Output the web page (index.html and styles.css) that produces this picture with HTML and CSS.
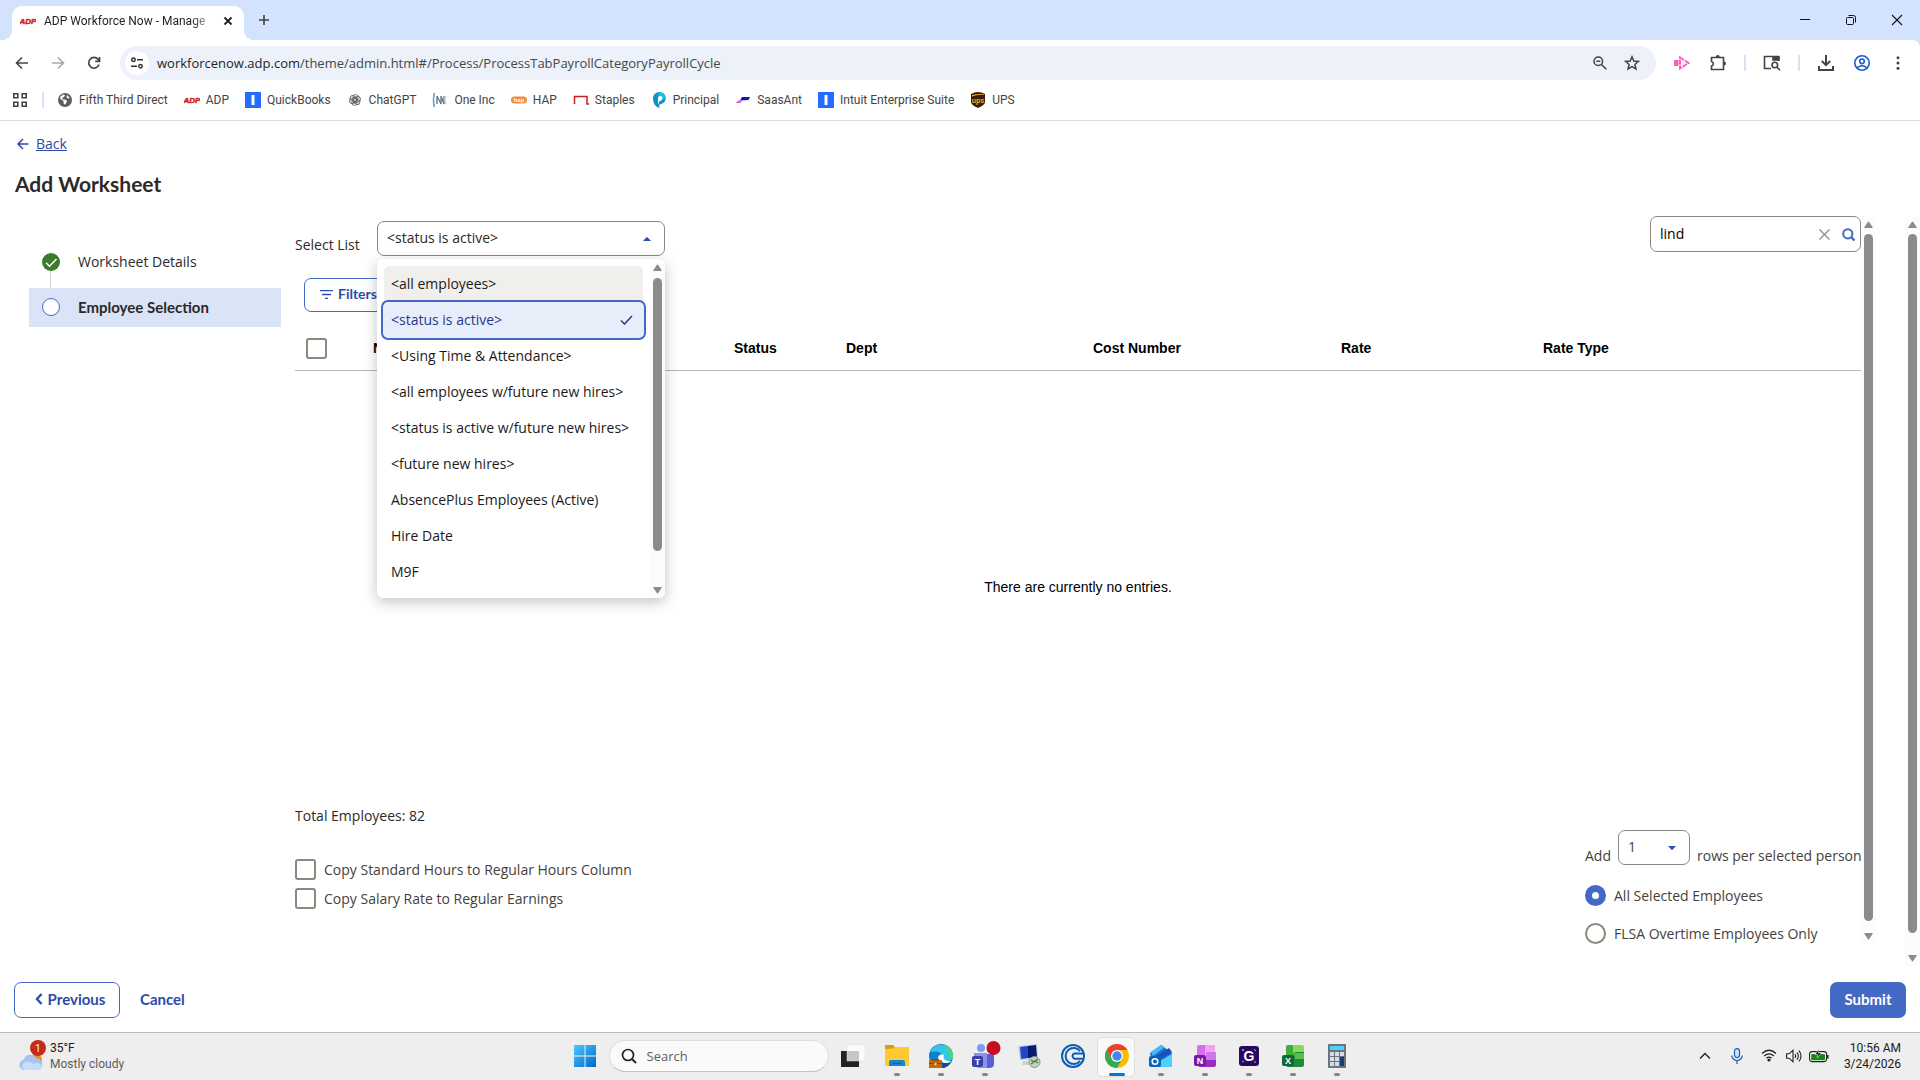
FILE: index.html
```html
<!DOCTYPE html>
<html lang="en">
<head>
<meta charset="utf-8">
<meta name="viewport" content="width=device-width, initial-scale=1">
<title>ADP Workforce Now - Manage Payroll</title>
<link rel="stylesheet" href="styles.css">
</head>
<body>
<header class="browser">
  <div class="tabs">
    <div class="tab">
      <svg width="16" height="16" viewBox="0 0 16 16"><text x="8" y="11" font-family="Liberation Sans, sans-serif" font-size="8" font-weight="700" font-style="italic" text-anchor="middle" fill="#d0271d" stroke="#d0271d" stroke-width=".5">ADP</text></svg>
      <span class="tab-title">ADP Workforce Now - Manage</span>
      <button class="icon-btn tab-close" aria-label="Close tab"><svg width="10" height="10" viewBox="0 0 10 10"><path d="M1.500 1.500l7 7M8.500 1.500l-7 7" stroke="#1f1f1f" stroke-width="1.800"/></svg></button>
    </div>
    <button class="icon-btn new-tab" aria-label="New tab"><svg width="12" height="12" viewBox="0 0 12 12"><path d="M6 1v10M1 6h10" stroke="#444" stroke-width="1.600"/></svg></button>
    <div class="window-controls">
      <button class="icon-btn" aria-label="Minimize"><svg width="12" height="12" viewBox="0 0 12 12"><path d="M1 5.500h10" stroke="#111"/></svg></button>
      <button class="icon-btn" aria-label="Restore"><svg width="12" height="12" viewBox="0 0 12 12" fill="none" stroke="#111"><rect x="1.500" y="3.500" width="7" height="7" rx="1"/><path d="M3.500 1.500h5a2 2 0 0 1 2 2v5"/></svg></button>
      <button class="icon-btn" aria-label="Close"><svg width="12" height="12" viewBox="0 0 12 12"><path d="M1 1l10 10M11 1L1 11" stroke="#111" stroke-width="1.100"/></svg></button>
    </div>
  </div>
  <div class="nav">
    <button class="icon-btn" aria-label="Back"><svg width="14" height="14" viewBox="0 0 14 14" fill="none" stroke="#444" stroke-width="1.600"><path d="M13 7H2M7 1.500L1.500 7 7 12.500"/></svg></button>
    <button class="icon-btn" aria-label="Forward"><svg width="14" height="14" viewBox="0 0 14 14" fill="none" stroke="#a8a8a8" stroke-width="1.600"><path d="M1 7h11M7 1.500L12.500 7 7 12.500"/></svg></button>
    <button class="icon-btn" aria-label="Reload"><svg width="14" height="14" viewBox="0 0 14 14" fill="none" stroke="#444" stroke-width="1.700"><path d="M12 8.500A5.300 5.300 0 1 1 11 3.300L12.500 5M12.500 1v4.300H8.200"/></svg></button>
    <div class="omnibox">
      <button class="site-info" aria-label="Site information"><svg width="12" height="12" viewBox="0 0 12 12" fill="none" stroke="#333" stroke-width="1.500"><circle cx="2.500" cy="2.800" r="1.700"/><path d="M6 2.800h6M0 9.200h6"/><circle cx="9.500" cy="9.200" r="1.700"/></svg></button>
      <span class="url"><b>workforcenow.adp.com</b>/theme/admin.html#/Process/ProcessTabPayrollCategoryPayrollCycle</span>
      <button class="icon-btn" aria-label="Zoom"><svg width="14" height="14" viewBox="0 0 14 14" fill="none" stroke="#444" stroke-width="1.500"><circle cx="5.300" cy="5.300" r="4.300"/><path d="M8.500 8.500L13.300 13.300M3.300 5.300h4"/></svg></button>
      <button class="icon-btn" aria-label="Bookmark this tab"><svg width="16" height="16" viewBox="0 0 16 16" fill="none" stroke="#444" stroke-width="1.500"><path d="M8 1.800l1.800 4.200 4.600.4-3.500 3 1.100 4.500L8 11.500l-4 2.400 1.100-4.500-3.500-3 4.600-.4z"/></svg></button>
    </div>
    <div class="extensions">
      <button class="icon-btn" aria-label="Screen recorder"><svg width="16" height="14" viewBox="0 0 16 14"><path fill="#ff5cb8" d="M0 4h4.500v6H0z"/><path fill="none" stroke="#ff5cb8" stroke-width="2" stroke-dasharray="5 1" d="M6 1.500L14.500 7 6 12.500z"/></svg></button>
      <button class="icon-btn" aria-label="Extensions"><svg width="16" height="16" viewBox="0 0 16 16" fill="none" stroke="#444" stroke-width="1.600"><path d="M1.500 2.500h12v12h-12V11a2.300 2.300 0 0 0 0-4.500z"/><path fill="#444" stroke="none" d="M5.800 2a2 2 0 0 1 4 0zM14 6.500a2 2 0 0 1 0 4z"/></svg></button>
      <span class="divider"></span>
      <button class="icon-btn" aria-label="Search tabs"><svg width="18" height="16" viewBox="0 0 18 16" fill="none" stroke="#444" stroke-width="1.600"><path d="M8 13.500H1.500v-12h14V6"/><path fill="#444" d="M10 2h6v3h-6z"/><circle cx="11.800" cy="10" r="2.800"/><path d="M13.800 12l3.200 3.200"/></svg></button>
      <span class="divider"></span>
      <button class="icon-btn" aria-label="Downloads"><svg width="16" height="16" viewBox="0 0 16 16" fill="none" stroke="#444" stroke-width="2"><path d="M8 0v10M3.800 6L8 10.200 12.200 6M1 11v4h14v-4"/></svg></button>
      <button class="icon-btn" aria-label="Profile"><svg width="16" height="16" viewBox="0 0 16 16" fill="none" stroke="#1a5bd0" stroke-width="1.600"><circle cx="8" cy="8" r="7.200"/><circle cx="8" cy="6.300" r="2.300"/><path d="M3 13q5-4.500 10 0"/></svg></button>
      <button class="icon-btn" aria-label="Menu"><svg width="4" height="14" viewBox="0 0 4 14" fill="#444"><circle cx="2" cy="1.700" r="1.500"/><circle cx="2" cy="7" r="1.500"/><circle cx="2" cy="12.300" r="1.500"/></svg></button>
    </div>
  </div>
  <nav class="bookmarks" aria-label="Bookmarks">
    <button class="icon-btn apps" aria-label="Apps"><svg width="14" height="14" viewBox="0 0 14 14" fill="none" stroke="#444" stroke-width="1.600"><path d="M.8.8h4v4h-4zM9.200.8h4v4h-4zM.8 9.200h4v4h-4zM9.200 9.200h4v4h-4z"/></svg></button>
    <span class="divider"></span>
    <a href="#"><svg width="16" height="16" viewBox="0 0 16 16"><circle cx="8" cy="8" r="7" fill="#5a5e63"/><path d="M3 5l3-2.500 2 .5-1 2-2 1 1 1.500 3 .3 1 2-2 3-1.300-1L6.500 9 3.500 7zM10 3l3 3-2 .5L9.500 5z" fill="#fff"/></svg>Fifth Third Direct</a>
    <a href="#"><svg width="16" height="16" viewBox="0 0 16 16"><text x="8" y="11" font-family="Liberation Sans, sans-serif" font-size="8" font-weight="700" font-style="italic" text-anchor="middle" fill="#d0271d" stroke="#d0271d" stroke-width=".5">ADP</text></svg>ADP</a>
    <a href="#"><svg width="16" height="16" viewBox="0 0 16 16"><path fill="#236cff" d="M0 0h16v16H0z"/><path fill="#fff" d="M6.500 3h3v10h-3z"/></svg>QuickBooks</a>
    <a href="#"><svg width="16" height="16" viewBox="0 0 16 16" fill="none" stroke="#666" stroke-width=".9"><rect x="6" y="2.500" width="5" height="7" rx="2.500"/><rect x="6" y="2.500" width="5" height="7" rx="2.500" transform="rotate(60 8 8)"/><rect x="6" y="2.500" width="5" height="7" rx="2.500" transform="rotate(120 8 8)"/><rect x="6" y="2.500" width="5" height="7" rx="2.500" transform="rotate(180 8 8)"/><rect x="6" y="2.500" width="5" height="7" rx="2.500" transform="rotate(240 8 8)"/><rect x="6" y="2.500" width="5" height="7" rx="2.500" transform="rotate(300 8 8)"/></svg>ChatGPT</a>
    <a href="#"><svg width="16" height="16" viewBox="0 0 16 16" fill="none"><path d="M2.500 1Q.5 8 2.500 15" stroke="#5aa5d2" stroke-width="1.600"/><path d="M5 4v8M5 4l4 8V4l3 8V4" stroke="#62738a" stroke-width="1.300"/><path d="M14 4q-2 4 0 8" stroke="#b6dff0" stroke-width="1.500"/></svg>One Inc</a>
    <a href="#"><svg width="16" height="16" viewBox="0 0 16 16"><rect y="4.500" width="16" height="7" rx="3.500" fill="#f08a3c"/><text x="8" y="10" text-anchor="middle" font-family="Liberation Sans, sans-serif" font-weight="700" font-size="6" fill="#fff">hap</text></svg>HAP</a>
    <a href="#"><svg width="16" height="16" viewBox="0 0 16 16" fill="none"><path d="M1.500 12V4.500h12.500V12h2" stroke="#cc1b24" stroke-width="1.500"/></svg>Staples</a>
    <a href="#"><svg width="16" height="16" viewBox="0 0 16 16"><path fill="#0a94cc" d="M8.500 0a6.200 6.200 0 1 1 0 12.400Q8 14 8.500 16 2 14 2 6.500A6.400 6.400 0 0 1 8.500 0z"/><path fill="#17c2de" d="M8.500 0a6.200 6.200 0 0 1 5.800 8L7 3z"/><path fill="#fff" d="M7 12V6.200A2.300 2.300 0 1 1 9.500 8.700Q7.500 9 7.500 12z"/></svg>Principal</a>
    <a href="#"><svg width="16" height="16" viewBox="0 0 16 16"><path fill="#e45bc2" d="M1 11l2-2.500h4L5.500 11z"/><path fill="#1212c6" d="M5 8.500L7 5h8l-1.500 3z"/></svg>SaasAnt</a>
    <a href="#"><svg width="16" height="16" viewBox="0 0 16 16"><path fill="#236cff" d="M0 0h16v16H0z"/><path fill="#fff" d="M6.500 3h3v10h-3z"/></svg>Intuit Enterprise Suite</a>
    <a href="#"><svg width="16" height="16" viewBox="0 0 16 16"><path fill="#3a1d0c" d="M1 2q7-4 14 0v8q0 3-7 6-7-3-7-6z"/><path fill="#f5a81c" d="M2 3q6-1.500 12-1v.800q-7-.4-12 1.600z"/><text x="8" y="11" text-anchor="middle" font-family="Liberation Sans, sans-serif" font-weight="700" font-size="7" fill="#f5a81c">ups</text></svg>UPS</a>
  </nav>
</header>

<main class="page">
  <a class="back" href="#"><svg width="12" height="12" viewBox="0 0 12 12" fill="none" stroke="#2c4ba8" stroke-width="1.500"><path d="M11.500 6H1.500M6 1L1 6l5 5"/></svg><span>Back</span></a>
  <h1>Add Worksheet</h1>

  <div class="panel">
    <ol class="steps">
      <li class="step done"><svg width="18" height="18" viewBox="0 0 18 18"><circle cx="9" cy="9" r="9" fill="#3d7a2e"/><path d="M4 9.800l3.500 3.500L14.500 6" fill="none" stroke="#fff" stroke-width="1.500"/></svg>Worksheet Details</li>
      <li class="step current" aria-current="step"><svg width="18" height="18" viewBox="0 0 18 18"><circle cx="9" cy="9" r="8.500" fill="#fff" stroke="#4469c5"/></svg>Employee Selection</li>
    </ol>

    <section class="content">
      <div class="controls">
        <div class="list-field">
          <label for="list">Select List</label>
          <div class="combo">
            <select id="list" class="field"><option>&lt;status is active&gt;</option></select>
            <svg class="caret" width="8" height="4" viewBox="0 0 8 4"><path fill="#2c4fb3" d="M3.500.2h1L8 4H0z"/></svg>
            <div class="menu">
              <ul role="listbox" aria-label="Select List">
                <li role="option" class="hover">&lt;all employees&gt;</li>
                <li role="option" class="selected" aria-selected="true">&lt;status is active&gt;<svg width="13" height="10" viewBox="0 0 13 10" fill="none" stroke="#1f3a8a" stroke-width="1.500"><path d="M1 5.500L4.500 9 12 1"/></svg></li>
                <li role="option">&lt;Using Time &amp; Attendance&gt;</li>
                <li role="option">&lt;all employees w/future new hires&gt;</li>
                <li role="option">&lt;status is active w/future new hires&gt;</li>
                <li role="option">&lt;future new hires&gt;</li>
                <li role="option">AbsencePlus Employees (Active)</li>
                <li role="option">Hire Date</li>
                <li role="option">M9F</li>
              </ul>
              <div class="scroll menu-scroll"><svg width="9" height="8" viewBox="0 0 9 8"><path fill="#8b8b8b" d="M4 .8q.5-.7 1 0l3.700 5.400q.4.8-.5.8H.8Q-.1 7 .3 6.200z"/></svg><span class="thumb"></span><svg width="9" height="8" viewBox="0 0 9 8"><path fill="#8b8b8b" d="M4 7.200q.5.7 1 0l3.700-5.400Q9.100 1 8.200 1H.8Q-.1 1 .3 1.800z"/></svg></div>
            </div>
          </div>
        </div>
        <div class="search">
          <input type="text" value="lind" aria-label="Search employees">
          <button class="icon-btn" aria-label="Clear"><svg width="11" height="11" viewBox="0 0 11 11"><path d="M.5.5l10 10M10.500.5l-10 10" stroke="#8a8a8a" stroke-width="1.200"/></svg></button>
          <button class="icon-btn" aria-label="Search"><svg width="13" height="13" viewBox="0 0 13 13" fill="none" stroke="#4469c5" stroke-width="2"><circle cx="5.800" cy="5.800" r="4.600"/><path d="M9 9l3.500 3.500" stroke-width="2.400"/></svg></button>
        </div>
      </div>

      <button class="btn outline filters"><svg width="13" height="9" viewBox="0 0 13 9" stroke="#2c4fb3" stroke-width="1.300"><path d="M0 .7h13M2 4.500h9M5 8.300h3"/></svg>Filters</button>

      <table class="grid">
        <colgroup><col class="c-check"><col class="c-name"><col class="c-status"><col class="c-dept"><col class="c-cost"><col class="c-rate"><col></colgroup>
        <thead><tr><th><input type="checkbox" aria-label="Select all"></th><th>Name</th><th>Status</th><th>Dept</th><th>Cost Number</th><th>Rate</th><th>Rate Type</th></tr></thead>
        <tbody><tr><td colspan="7">There are currently no entries.</td></tr></tbody>
      </table>

      <p class="total">Total Employees: 82</p>

      <div class="options">
        <div class="checks">
          <label><input type="checkbox">Copy Standard Hours to Regular Hours Column</label>
          <label><input type="checkbox">Copy Salary Rate to Regular Earnings</label>
        </div>
        <div class="rows">
          <div class="add-rows">
            <label for="count">Add</label>
            <div class="combo">
              <select id="count" class="field"><option>1</option></select>
              <svg class="caret" width="8" height="4" viewBox="0 0 8 4"><path fill="#2c4fb3" d="M3.500 3.800h1L8 0H0z"/></svg>
            </div>
            <span>rows per selected person</span>
          </div>
          <label><input type="radio" name="scope" checked>All Selected Employees</label>
          <label><input type="radio" name="scope">FLSA Overtime Employees Only</label>
        </div>
      </div>
    </section>

    <div class="scroll inner-scroll"><svg width="9" height="8" viewBox="0 0 9 8"><path fill="#8b8b8b" d="M4 .8q.5-.7 1 0l3.700 5.400q.4.8-.5.8H.8Q-.1 7 .3 6.200z"/></svg><span class="thumb"></span><svg width="9" height="8" viewBox="0 0 9 8"><path fill="#8b8b8b" d="M4 7.200q.5.7 1 0l3.700-5.400Q9.100 1 8.200 1H.8Q-.1 1 .3 1.800z"/></svg></div>
    <div class="scroll outer-scroll"><svg width="9" height="8" viewBox="0 0 9 8"><path fill="#8b8b8b" d="M4 .8q.5-.7 1 0l3.700 5.400q.4.8-.5.8H.8Q-.1 7 .3 6.200z"/></svg><span class="thumb"></span><svg width="9" height="8" viewBox="0 0 9 8"><path fill="#8b8b8b" d="M4 7.200q.5.7 1 0l3.700-5.400Q9.100 1 8.200 1H.8Q-.1 1 .3 1.800z"/></svg></div>
  </div>

  <div class="actions">
    <button class="btn outline previous"><svg width="8" height="12" viewBox="0 0 8 12" fill="none" stroke="#2c4fb3" stroke-width="2.400"><path d="M6.500 1L2 6l4.500 5"/></svg>Previous</button>
    <button class="btn text">Cancel</button>
    <button class="btn primary">Submit</button>
  </div>
</main>

<footer class="taskbar">
  <button class="weather">
    <svg width="28" height="32" viewBox="0 0 28 32"><circle cx="18" cy="20" r="6" fill="#f28a1e"/><path d="M6 30a5 5 0 0 1-.5-9.900 7 7 0 0 1 13-1.500A6 6 0 0 1 21 30z" fill="#a9c3ee"/><path d="M6 30a5 5 0 0 1 0-7.500Q12 20 15 24q6-3 9 2.500-.5 3-3 3.500z" fill="#c9ddf8"/><circle cx="20" cy="8" r="8" fill="#c42b1c"/><text x="20" y="12" text-anchor="middle" font-family="Open Sans, sans-serif" font-size="11" fill="#fff">1</text></svg>
    <span>35°F<br><small>Mostly cloudy</small></span>
  </button>
  <div class="apps-row">
    <button class="app" aria-label="Start"><svg width="24" height="24" viewBox="0 0 24 24"><defs><linearGradient id="win" x2="1" y2="1"><stop stop-color="#4cc9ff"/><stop offset="1" stop-color="#0067c9"/></linearGradient></defs><path fill="url(#win)" d="M1 1h10.500v10.500H1zM12.500 1H23v10.500H12.500zM1 12.500h10.500V23H1zM12.500 12.500H23V23H12.500z"/></svg></button>
    <label class="task-search"><svg width="16" height="16" viewBox="0 0 16 16" fill="none" stroke="#222" stroke-width="1.700"><circle cx="7" cy="7" r="5.500"/><path d="M11 11l4 4" stroke-width="2"/></svg><input type="text" placeholder="Search" aria-label="Search"></label>
    <div class="app-list">
      <button class="app" aria-label="Task view"><svg width="24" height="24" viewBox="0 0 24 24"><path fill="#222" d="M0 7h18v16H0z"/><path fill="#fff" fill-opacity=".75" stroke="#ddd" stroke-width=".5" d="M6 1h18v16H6z"/></svg></button>
      <button class="app open" aria-label="File Explorer"><svg width="24" height="24" viewBox="0 0 24 24"><path fill="#d99b09" d="M0 2q0-1 1-1h7l2 2v4H0z"/><path fill="#ffc933" d="M0 5l8-.5L10 3h14v19H0z"/><path fill="#1583cf" d="M4 22v-4q0-2 2-2h12q2 0 2 2v4z"/><path stroke="#0b5ba5" d="M8 19.500h8"/></svg></button>
      <button class="app open" aria-label="Edge"><svg width="24" height="24" viewBox="0 0 24 24"><circle cx="12" cy="12" r="12" fill="#0c7fd0"/><path fill="#35c7e8" d="M1 8A12 12 0 0 1 24 12q0 5-6 5-5-1-4-5-2-6-13-4z"/><path fill="#4bd76a" d="M14 0q10 3 10 12 0 3-3 4 0-9-7-16z"/><path fill="#fff" d="M9 13q2-4 6-2-2 5 4 6l3 0q-3 4-8 2-5-2-5-6z"/><path fill="#134b91" d="M12 18q5 2 10 0-3 6-10 6z"/><path fill="#bf6a0b" d="M0 16h13v8H0z"/><path fill="#8c430b" d="M3 15h7v1.500H3zM0 19h13v1H0z"/><circle cx="6.500" cy="20" r="1.200" fill="#ffd75e"/></svg></button>
      <button class="app open" aria-label="Teams"><svg width="32" height="30" viewBox="0 0 32 30"><circle cx="12" cy="7" r="4" fill="#7b9cf2"/><path fill="#5b5fd6" d="M9 13h16v10q0 4-5 4h-8z"/><path fill="#8c90ef" d="M5 12h13v15h-6q-7 0-7-5z"/><rect x="3" y="15" width="11" height="11" rx="2" fill="#3b3fa8"/><text x="8.500" y="24" text-anchor="middle" font-family="Liberation Sans, sans-serif" font-weight="700" font-size="9" fill="#fff">T</text><circle cx="24.500" cy="7" r="7" fill="#c50f1f"/></svg></button>
      <button class="app" aria-label="Remote Desktop"><svg width="24" height="24" viewBox="0 0 24 24"><path fill="#c9d0d8" d="M1 2l19-2 1 15-18 1zM6 17h8l2 4H5z"/><path fill="#1c49c4" d="M3 3l8-1v12l-7 1z"/><path fill="#071a72" d="M11 2l8-1 1 12-9 1z"/><circle cx="17.500" cy="18" r="5.500" fill="#c7cdc4" stroke="#8f988c"/><path d="M14 16l3 2-3 2M21 15l-3 2 3 2" fill="none" stroke="#238b28" stroke-width="1.300"/></svg></button>
      <button class="app" aria-label="CCC"><svg width="24" height="24" viewBox="0 0 24 24" fill="none" stroke="#0a5fb4"><circle cx="12" cy="12" r="11" stroke-width="2"/><path d="M19 7.200A8 8 0 1 0 19 16.800" stroke-width="2"/><path d="M23 9.500H13.500a2.700 2.700 0 0 0 0 5.200H23" stroke-width="2"/></svg></button>
      <button class="app open active" aria-label="Chrome"><svg width="24" height="24" viewBox="0 0 24 24"><circle cx="12" cy="12" r="12" fill="#fbbc05"/><path fill="#ea4335" d="M1.600 6A12 12 0 0 1 22.400 6H12L6.800 15z"/><path fill="#34a853" d="M1.600 6A12 12 0 0 0 12 24l5.200-9H6.800z"/><circle cx="12" cy="12" r="6" fill="#fff"/><circle cx="12" cy="12" r="4.700" fill="#4285f4"/></svg></button>
      <button class="app open" aria-label="Outlook"><svg width="24" height="24" viewBox="0 0 24 24"><path fill="#1273cf" d="M1 9L12 1l11 8v12q0 2-2 2H4z"/><path fill="#43b8f2" d="M2 8L12 1l4 2-12 9z"/><path fill="#1d4fb8" d="M6 13L20 4l3 4-14 9z"/><path fill="#4fd0f8" d="M9 18l14-8v11q0 2-2 2H9z"/><rect y="12" width="12" height="11" rx="2" fill="#0b63ba"/><circle cx="6" cy="17.500" r="2.800" fill="none" stroke="#fff" stroke-width="1.600"/></svg></button>
      <button class="app open" aria-label="OneNote"><svg width="24" height="24" viewBox="0 0 24 24"><path fill="#d86df0" d="M4 3q0-2 2-2h14q2 0 2 2v8H4z"/><path fill="#f3a0f5" d="M12 1h8q2 0 2 2v8H12z"/><path fill="#9a2bc4" d="M5 11h7v5h11v5q0 2-2 2H7q-2 0-2-2z"/><path fill="#c77ae8" d="M13 8h10v8H13z"/><rect x="1" y="11" width="12" height="11" rx="2" fill="#7719aa"/><text x="7" y="20" text-anchor="middle" font-family="Liberation Sans, sans-serif" font-weight="700" font-size="9" fill="#fff">N</text></svg></button>
      <button class="app open" aria-label="G"><svg width="24" height="24" viewBox="0 0 24 24"><rect x="2" y="2" width="20" height="20" rx="3" fill="#28085c"/><text x="12" y="17" text-anchor="middle" font-family="Liberation Sans, sans-serif" font-weight="700" font-size="14" fill="#fff">G</text><path d="M5 6h2M6 5v2M17 5l2 2M5 18l2-1M17 18h2" stroke="#b9a2e8"/></svg></button>
      <button class="app open" aria-label="Excel"><svg width="24" height="24" viewBox="0 0 24 24"><path fill="#3fae3c" d="M5 3q0-2 2-2h8v12H5z"/><path fill="#86d95b" d="M12 1h9q2 0 2 2v6H12z"/><path fill="#1f8a3c" d="M5 12h9V8h9v13q0 2-2 2H7q-2 0-2-2z"/><path fill="#56bf4b" d="M14 9h9v6h-9z"/><rect x="1" y="11" width="12" height="11" rx="2" fill="#0e6b38"/><text x="7" y="20" text-anchor="middle" font-family="Liberation Sans, sans-serif" font-weight="700" font-size="9" fill="#fff">X</text></svg></button>
      <button class="app open" aria-label="Calculator"><svg width="24" height="24" viewBox="0 0 24 24"><rect x="3" width="18" height="24" rx="1" fill="#687581"/><path fill="#4fd0f5" d="M5 2h14v4H5z"/><path fill="#d8dde2" d="M5 8h4v4H5zM10 8h4v4h-4zM15 8h4v4h-4zM5 13h4v4H5zM10 13h4v4h-4zM5 18h4v4H5zM10 18h4v4h-4z"/><path fill="#143f7c" d="M15 13h4v9h-4z"/></svg></button>
    </div>
  </div>
  <div class="tray">
    <button class="icon-btn" aria-label="Hidden icons"><svg width="12" height="8" viewBox="0 0 12 8" fill="none" stroke="#222" stroke-width="1.400"><path d="M1 6.500l5-5 5 5"/></svg></button>
    <button class="icon-btn mic" aria-label="Microphone"><svg width="12" height="16" viewBox="0 0 12 16" fill="none" stroke="#1c5fb4" stroke-width="1.200"><rect x="3.500" y=".6" width="5" height="9" rx="2.500" fill="#cfe3fa"/><path d="M.8 7.500a5.200 5 0 0 0 10.400 0M6 12.500V16"/></svg></button>
    <button class="icon-btn" aria-label="Network"><svg width="16" height="13" viewBox="0 0 16 13" fill="none" stroke="#222" stroke-width="1.200"><path d="M1 4.500q7-6.500 14 0M3.200 7q4.800-4.400 9.600 0M5.400 9.300q2.600-2.300 5.200 0"/><circle cx="8" cy="11" r="1" fill="#222"/></svg></button>
    <button class="icon-btn" aria-label="Volume"><svg width="16" height="14" viewBox="0 0 16 14" fill="none" stroke="#222" stroke-width="1.100"><path d="M.6 4.800h2.600L7 1.200v11.600L3.200 9.200H.6zM9 5q1.200 2 0 4M11 3.300q2.600 3.700 0 7.400M13 1.600q4 5.400 0 10.800"/></svg></button>
    <button class="icon-btn" aria-label="Battery"><svg width="20" height="14" viewBox="0 0 20 14"><rect x=".6" y="2.600" width="17" height="10" rx="2.500" fill="#fff" stroke="#222" stroke-width="1.100"/><rect x="2.200" y="5" width="13.800" height="6.300" rx="1" fill="#138a13"/><path d="M18.800 6v3.500" stroke="#222" stroke-width="1.500"/><path fill="#111" stroke="#eee" stroke-width=".6" d="M10 0L6 5.500h2.800L8 9l4.500-5H9.500z"/></svg></button>
    <time>10:56 AM<br>3/24/2026</time>
  </div>
</footer>
</body>
</html>
```
FILE: styles.css
```css
:root {
  --blue: #4469c5;
  --blue-dark: #2c4ba8;
  --ink: #2d2926;
  --edge: #8f877d;
  --sans: "Open Sans", "Noto Sans", sans-serif;
  --ui: Roboto, "Noto Sans", sans-serif;
  --bold: Lato, "Open Sans", sans-serif;
}

* { box-sizing: border-box; }
svg { display: block; flex: none; }

body {
  margin: 0;
  min-height: 100vh;
  display: flex;
  flex-direction: column;
  background: #fff;
  color: var(--ink);
  font: 14px/20px var(--sans);
}

button, input, select { font: inherit; color: inherit; }
button { padding: 0; border: 0; background: none; }

.icon-btn {
  display: flex;
  align-items: center;
  justify-content: center;
  width: 20px;
  height: 20px;
  flex: none;
}

/* Browser chrome */
.browser { border-bottom: 1px solid #dcdcdc; background: #d3e3fd; font: 12px/16px var(--ui); }
.tabs { display: flex; align-items: flex-end; height: 40px; padding-left: 12px; }
.tab {
  position: relative;
  display: flex;
  align-items: center;
  gap: 8px;
  width: 232px;
  height: 34px;
  padding: 0 6px 4px 8px;
  border-radius: 10px 10px 0 0;
  background: #fff;
  color: #1f1f1f;
}
.tab::before, .tab::after { content: ""; position: absolute; bottom: 0; width: 10px; height: 10px; }
.tab::before { right: 100%; background: radial-gradient(circle at 0 0, transparent 10px, #fff 10px); }
.tab::after { left: 100%; background: radial-gradient(circle at 100% 0, transparent 10px, #fff 10px); }
.tab-title {
  flex: 1;
  white-space: nowrap;
  -webkit-mask-image: linear-gradient(90deg, #000 148px, transparent 172px);
  mask-image: linear-gradient(90deg, #000 148px, transparent 172px);
}
.new-tab { margin: 0 0 10px 10px; }
.window-controls { display: flex; gap: 26px; margin: 0 13px 10px auto; }

.nav { display: flex; align-items: center; gap: 16px; padding: 6px 12px 0; border-radius: 0 8px 0 0; background: #fff; }
.omnibox {
  display: flex;
  flex: 1;
  align-items: center;
  gap: 12px;
  height: 34px;
  padding: 0 14px 0 5px;
  border-radius: 17px;
  background: #ecf1fa;
}
.site-info { display: grid; place-items: center; width: 24px; height: 24px; border-radius: 50%; background: #fff; }
.url { flex: 1; margin-left: -4px; font: 13px/18px var(--sans); color: #474747; }
.url b { font-weight: 400; color: #1f1f1f; }
.extensions { display: flex; align-items: center; gap: 16px; }
.divider { width: 2px; height: 16px; background: #d3e3fd; }

.bookmarks { display: flex; align-items: center; gap: 16px; height: 40px; padding-left: 10px; background: #fff; color: #444; }
.bookmarks a { display: flex; align-items: center; gap: 6px; color: inherit; text-decoration: none; white-space: nowrap; }
.bookmarks .divider { margin: 0 -3px 0 -4px; }

/* Page */
.page { display: flex; flex: 1; flex-direction: column; padding-top: 13px; }
.back { display: flex; align-items: center; align-self: flex-start; gap: 7px; margin-left: 17px; color: var(--blue-dark); }
h1 { margin: 16px 0 18px 15px; font: bold 21px/28px var(--bold); }

.panel { display: flex; flex: 1; align-items: flex-start; }
.steps { width: 252px; margin: 27px 14px 0 29px; padding: 0; list-style: none; flex: none; }
.step { display: flex; align-items: center; gap: 18px; height: 39px; padding: 0 0 1px 13px; }
.done { position: relative; margin-bottom: 6px; }
.done::after { content: ""; position: absolute; left: 21px; top: 28px; width: 1px; height: 17px; background: #d5d2cc; }
.current { background: #d9e4f7; font: bold 15px/20px var(--bold); }

.content { flex: 1; min-width: 0; }
.controls { display: flex; justify-content: space-between; align-items: flex-start; }
.list-field { display: flex; align-items: flex-end; padding-top: 5px; }
.list-field label { width: 82px; padding-bottom: 1px; white-space: nowrap; }
.combo { position: relative; }
.field {
  display: block;
  width: 288px;
  height: 35px;
  padding: 0 9px 1px;
  border: 1px solid var(--edge);
  border-radius: 7px;
  background: #fff;
  appearance: none;
}
.caret { position: absolute; right: 14px; top: 16px; }

.search {
  display: flex;
  align-items: center;
  gap: 4px;
  width: 211px;
  height: 36px;
  padding: 0 2px 0 9px;
  border: 1px solid var(--edge);
  border-radius: 7px;
}
.search input { flex: 1; min-width: 0; padding: 0; border: 0; outline: 0; background: none; color: #000; }

.menu {
  position: absolute;
  z-index: 2;
  top: 38px;
  left: 0;
  display: flex;
  justify-content: space-between;
  width: 288px;
  height: 339px;
  border-radius: 6px;
  background: #fff;
  box-shadow: 0 4px 14px rgba(45, 41, 38, .28);
  color: #1c1a18;
}
.menu ul { width: 259px; margin: 7px 0 0 7px; padding: 0; list-style: none; }
.menu li { display: flex; align-items: center; height: 36px; padding: 0 7px; white-space: nowrap; }
.menu .hover { border-radius: 5px 5px 0 0; background: #f1efeb; }
.menu .selected {
  justify-content: space-between;
  height: 40px;
  margin: -2px -3px;
  padding: 0 11px 0 8px;
  border: 2px solid var(--blue);
  border-radius: 7px;
  background: #e7eefa;
  color: #1f3a8a;
}

.scroll { display: flex; flex-direction: column; align-items: center; gap: 2px; width: 15px; padding: 5px 0 4px; background: #fcfcfc; flex: none; }
.thumb { flex: 1; width: 9px; margin: 3px 0; border-radius: 5px; background: #8b8b8b; }
.inner-scroll { height: 728px; }
.outer-scroll { height: 750px; margin-left: 29px; }
.inner-scroll .thumb { margin-bottom: 9px; }
.outer-scroll .thumb { margin-bottom: 19px; }
.menu-scroll { border-radius: 0 6px 6px 0; }
.menu-scroll .thumb { margin: 4px 0 33px; }

.btn { display: flex; align-items: center; justify-content: center; height: 36px; padding: 0 0 2px; border-radius: 7px; color: var(--blue-dark); font: bold 15px/20px var(--bold); }
.outline { border: 1px solid var(--blue); }
.filters { justify-content: flex-start; gap: 5px; width: 95px; height: 34px; margin: 22px 0 0 9px; padding-left: 15px; font-size: 14px; }

.grid { width: 100%; margin-top: 14px; border-collapse: separate; border-spacing: 0; table-layout: fixed; color: #000; font: 14px/20px "Liberation Sans", Arial, sans-serif; }
.grid th { height: 45px; padding: 0; border-bottom: 1px solid #b9b9b9; text-align: left; }
.grid td { height: 432px; padding: 0; text-align: center; }
.grid th input { display: block; margin-left: 11px; }
.c-check { width: 78px; }
.c-name { width: 361px; }
.c-status { width: 112px; }
.c-dept { width: 247px; }
.c-cost { width: 248px; }
.c-rate { width: 202px; }

input[type="checkbox"], input[type="radio"] {
  width: 21px;
  height: 21px;
  margin: 0;
  border: 2px solid var(--edge);
  border-radius: 3px;
  background: #fff;
  appearance: none;
  flex: none;
}
input[type="radio"] { border-radius: 50%; }
input[type="radio"]:checked { border: 7px solid var(--blue); }

.total { margin: 3px 0 4px; }
.options { display: flex; justify-content: space-between; align-items: flex-start; color: #45413d; }
.checks { display: grid; gap: 8px; padding-top: 29px; }
.checks label, .rows > label { display: flex; align-items: center; gap: 8px; }
.rows { display: grid; gap: 17px; width: 276px; }
.add-rows { display: flex; align-items: flex-end; gap: 7px; height: 38px; padding-bottom: 2px; white-space: nowrap; }
.add-rows .combo { align-self: flex-start; }
.add-rows .field { width: 72px; }

.actions { display: flex; gap: 20px; padding: 16px 14px 14px; }
.previous { gap: 5px; width: 106px; padding-left: 6px; }
.primary { width: 76px; margin-left: auto; background: var(--blue); color: #fff; }

/* Taskbar */
.taskbar {
  display: grid;
  grid-template-columns: 1fr auto 1fr;
  align-items: center;
  height: 48px;
  padding-bottom: 2px;
  border-top: 1px solid #bdbdbd;
  background: #eee;
  color: #1a1a1a;
  font: 12px/16px var(--ui);
}
.weather { display: flex; align-items: center; gap: 4px; margin-left: 18px; text-align: left; }
.weather small { font-size: 12px; color: #5c5c5c; }
.apps-row { display: flex; align-items: center; gap: 2px; padding-left: 1px; }
.app-list { display: flex; }
.app { position: relative; display: grid; place-items: center; width: 44px; height: 44px; }
.open::after { content: ""; position: absolute; bottom: 2px; left: 19px; width: 6px; height: 3px; border-radius: 2px; background: #868686; }
.active::before { content: ""; position: absolute; inset: 3px 4px 1px 2px; border: 1px solid #e0e0e0; border-radius: 5px; background: #f9f9f9; }
.active svg { position: relative; }
.active::after { left: 14px; width: 16px; background: #0078d4; }
.task-search {
  display: flex;
  align-items: center;
  gap: 10px;
  width: 220px;
  height: 32px;
  padding: 0 11px;
  border: 1px solid #dedede;
  border-bottom-color: #c4c4c4;
  border-radius: 16px;
  background: #fafafa;
}
.task-search input { width: 150px; padding: 0; border: 0; outline: 0; background: none; font: 13px/18px var(--sans); }
.task-search input::placeholder { color: #606060; }
.tray { display: flex; align-items: center; justify-content: flex-end; gap: 5px; padding-right: 19px; }
.mic { margin: 0 7px; }
.tray time { margin-left: 10px; text-align: right; }
```
